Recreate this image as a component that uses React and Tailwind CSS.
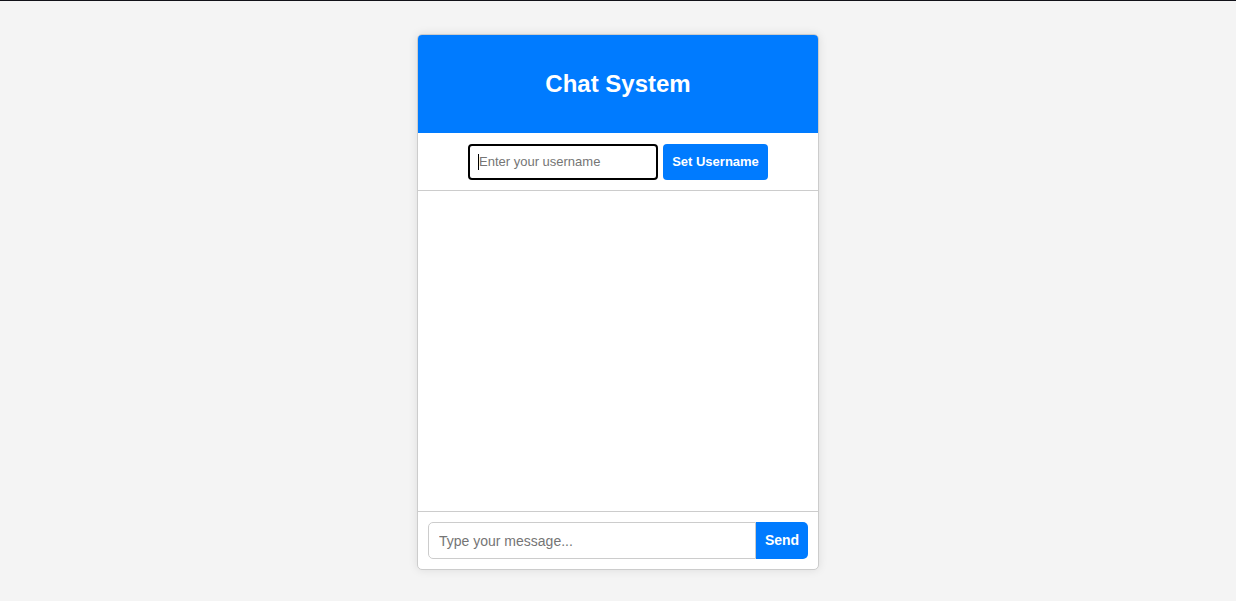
export default function App() {
  return (
    <div className="min-h-[601px] bg-[#f4f4f4] font-['Liberation_Sans',Arial,sans-serif]">
      <div className="h-px bg-[#111118]" />
      <div className="flex justify-center pt-[33px]">
        <div className="w-[402px] rounded-[5px] border border-[#cccccc] bg-white shadow-[0_0_10px_rgba(0,0,0,0.1)] overflow-hidden">
          <div className="flex h-[98px] items-center justify-center bg-[#007bff]">
            <h2 className="text-[24px] font-bold text-white">Chat System</h2>
          </div>
          <div className="flex h-[58px] items-start justify-center gap-[5px] border-b border-[#cccccc] pt-[11px]">
            <div className="flex h-[36px] w-[190px] items-center rounded-[4px] border-2 border-black px-[8px]">
              <span className="h-[16px] w-px bg-black" />
              <span className="text-[13px] text-[#757575]">Enter your username</span>
            </div>
            <button className="h-[36px] w-[105px] rounded-[4px] bg-[#007bff] text-[13px] font-bold text-white">
              Set Username
            </button>
          </div>
          <div className="h-[321px] border-b border-[#cccccc]" />
          <div className="flex h-[57px] items-start px-[10px] pt-[10px]">
            <input
              className="h-[37px] w-[328px] rounded-l-[5px] border border-[#cccccc] px-[10px] text-[14px] outline-none placeholder:text-[#757575]"
              placeholder="Type your message..."
            />
            <button className="h-[37px] w-[52px] rounded-r-[5px] bg-[#007bff] text-[14px] font-bold text-white">
              Send
            </button>
          </div>
        </div>
      </div>
    </div>
  )
}
